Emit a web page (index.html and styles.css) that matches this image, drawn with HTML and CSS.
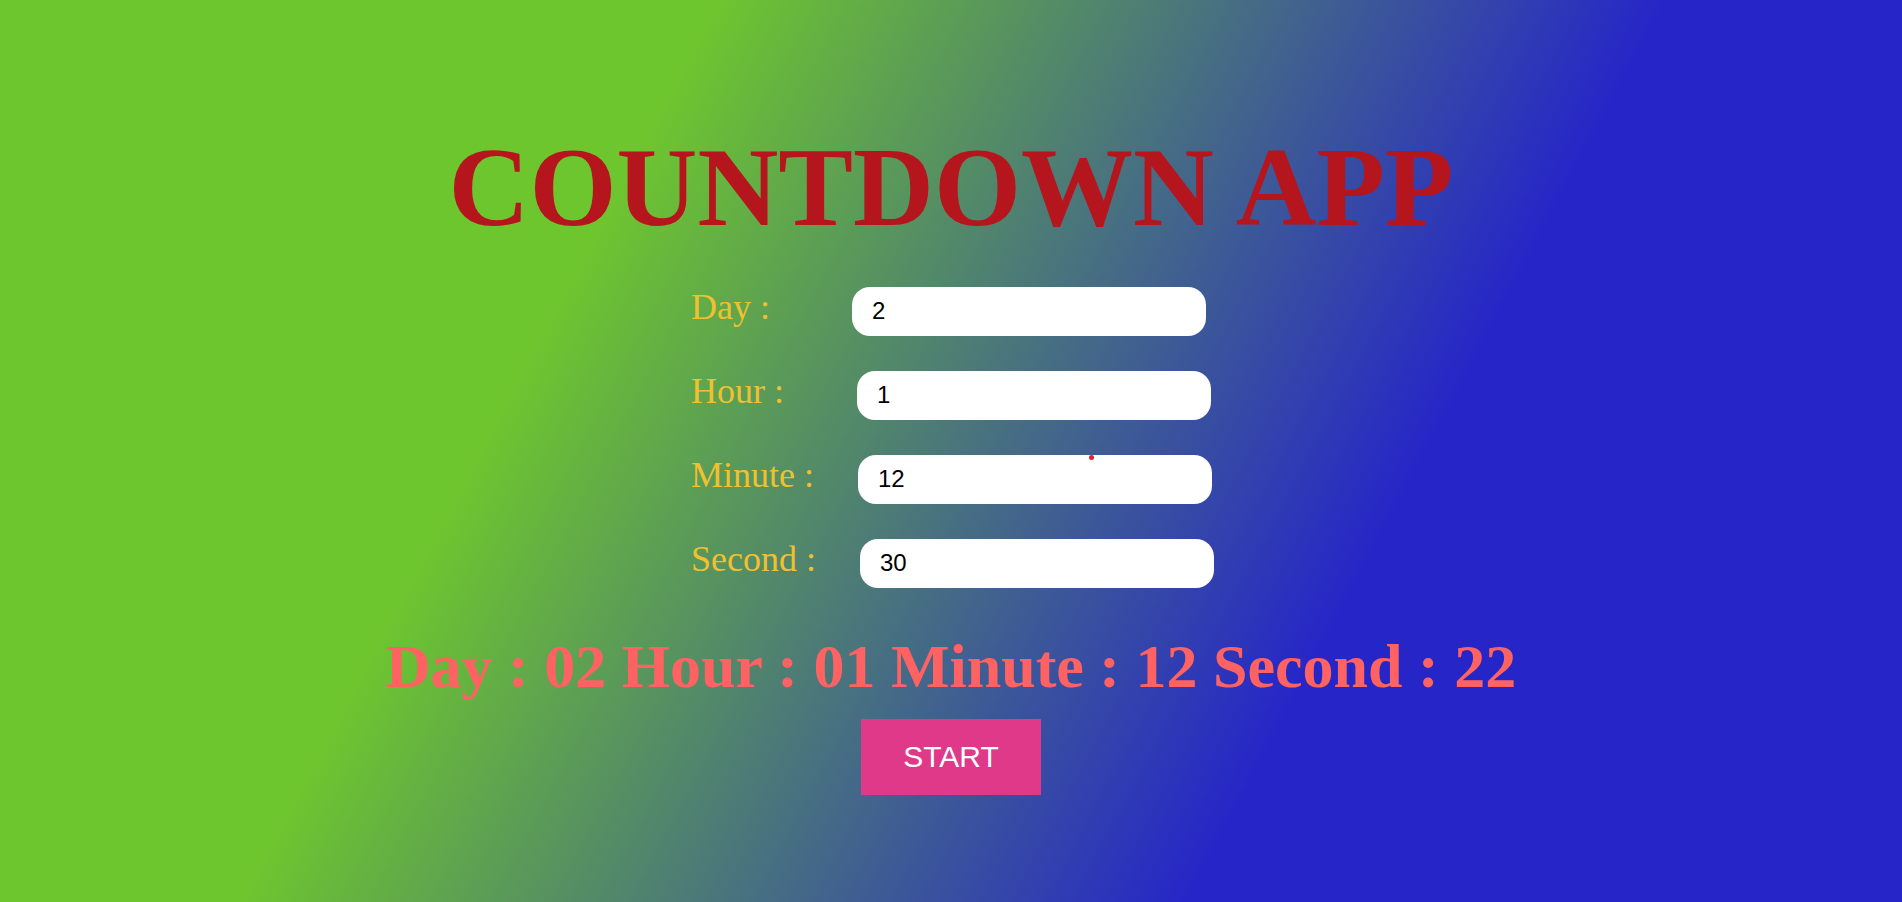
FILE: index.html
```html
<!DOCTYPE html>
<html lang="en">
<head>
<meta charset="utf-8">
<title>Countdown App</title>
<link rel="stylesheet" href="styles.css">
</head>
<body>
<main class="app">
  <h1 class="title">COUNTDOWN APP</h1>
  <form class="form">
    <div class="row row-day"><label class="label">Day :</label><input class="field" type="text" value="2"></div>
    <div class="row row-hour"><label class="label">Hour :</label><input class="field" type="text" value="1"></div>
    <div class="row row-minute"><label class="label">Minute :</label><input class="field" type="text" value="12"></div>
    <div class="row row-second"><label class="label">Second :</label><input class="field" type="text" value="30"></div>
  </form>
  <div class="display">Day : 02 Hour : 01 Minute : 12 Second : 22</div>
  <button class="start" type="button">START</button>
  <span class="dot"></span>
</main>
</body>
</html>
```

FILE: styles.css
```css
html, body {
  margin: 0;
  padding: 0;
}

body {
  min-height: 902px;
  background: linear-gradient(118deg, #6ec62e 30%, #2626c8 70%);
  font-family: "Liberation Serif", "Times New Roman", serif;
}

.app {
  position: relative;
  display: flex;
  flex-direction: column;
  align-items: center;
  padding-top: 131px;
  min-height: 902px;
  box-sizing: border-box;
}

.title {
  margin: 0;
  font-size: 112px;
  line-height: 112px;
  font-weight: bold;
  color: #b5161e;
  white-space: nowrap;
}

.form {
  width: 520px;
  margin: 43px 0 0;
  display: flex;
  flex-direction: column;
  gap: 34.5px;
}

.row {
  display: flex;
  align-items: baseline;
}

.label {
  font-size: 36px;
  color: #f0c030;
  white-space: nowrap;
}

.row-day .label { flex: 0 0 161px; }
.row-hour .label { flex: 0 0 166px; }
.row-minute .label { flex: 0 0 167px; }
.row-second .label { flex: 0 0 169px; }

.field {
  flex: none;
  width: 354px;
  height: 49px;
  box-sizing: border-box;
  border: none;
  border-radius: 18px;
  background: #fff;
  padding: 0 20px;
  font-family: "Liberation Sans", Arial, sans-serif;
  font-size: 24px;
  color: #000;
  outline: none;
}

.display {
  margin-top: 43px;
  font-size: 62px;
  line-height: 70px;
  font-weight: bold;
  color: #ff6262;
  white-space: nowrap;
}

.start {
  margin-top: 18px;
  width: 180px;
  height: 76px;
  border: none;
  background: #e0398a;
  color: #fff;
  font-family: "Liberation Sans", Arial, sans-serif;
  font-size: 30px;
  padding: 0;
}

.dot {
  position: absolute;
  left: 1089px;
  top: 455px;
  width: 5px;
  height: 5px;
  border-radius: 50%;
  background: #e8202a;
}
```
